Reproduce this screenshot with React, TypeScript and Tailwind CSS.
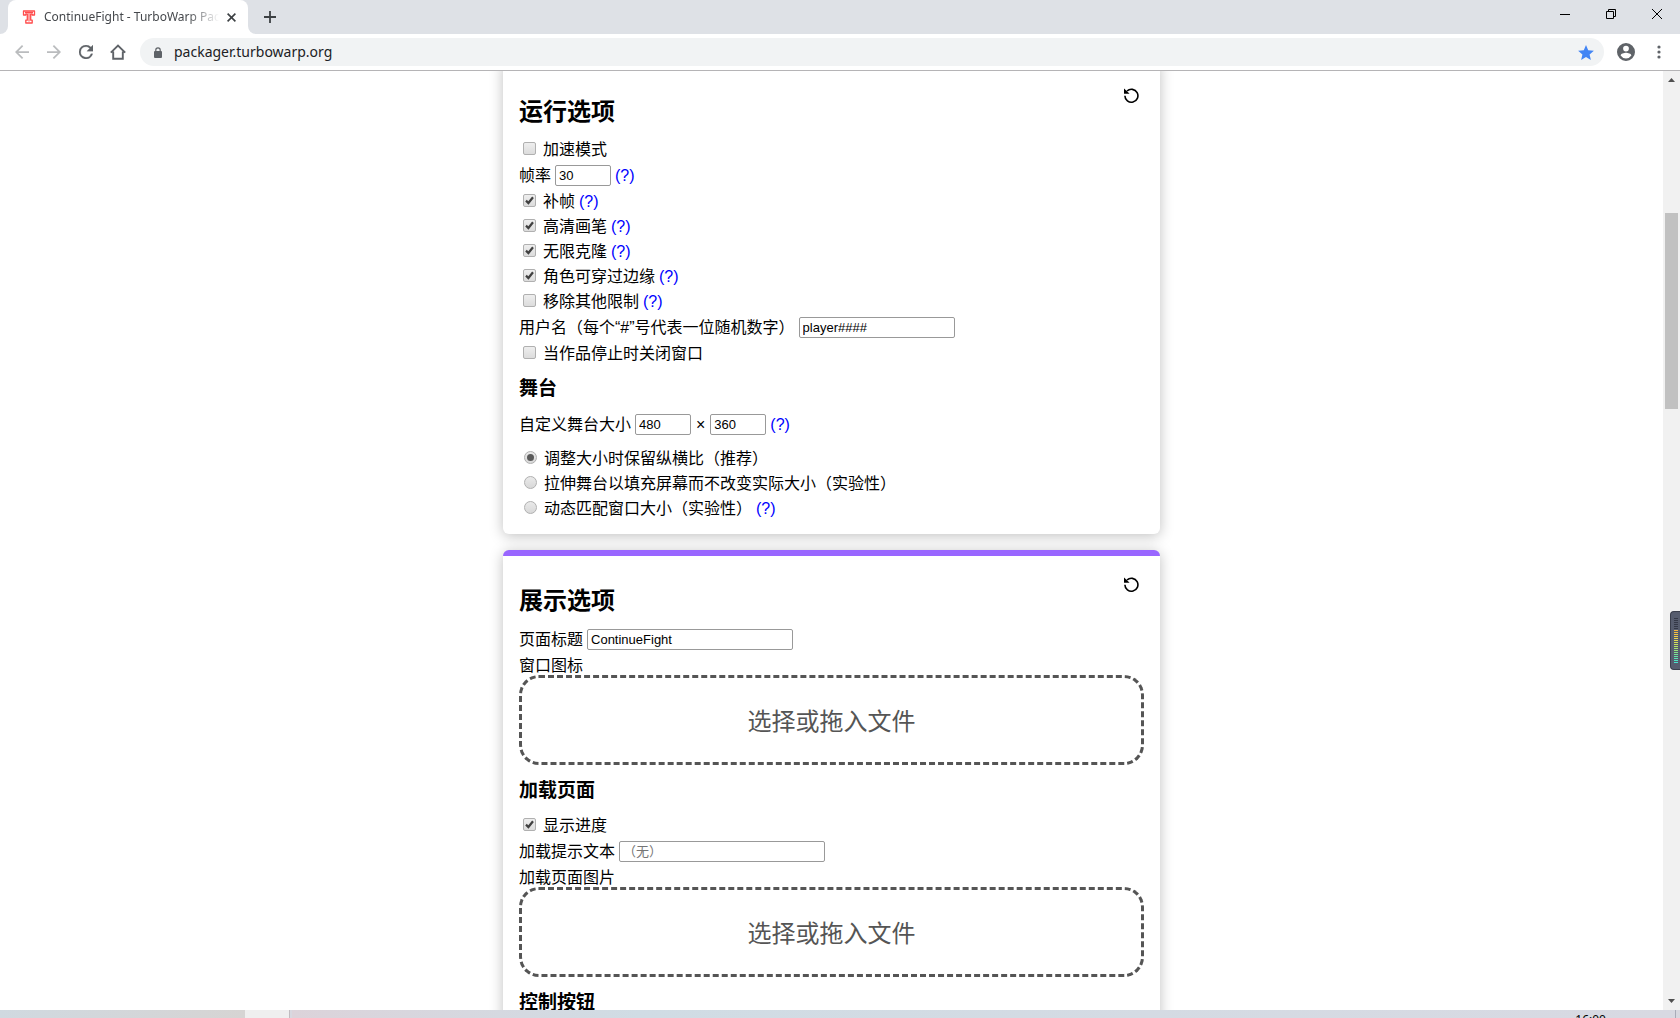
import { useId, type ReactNode } from "react";
import clsx from "clsx";

const METER_COLORS = [
  "bg-[#343847]", "bg-[#343847]", "bg-[#343847]", "bg-[#343847]", "bg-[#343847]", "bg-[#343847]",
  "bg-[#f5b83d]", "bg-[#f5c03f]", "bg-[#f4c843]", "bg-[#f2d048]", "bg-[#ecd74d]", "bg-[#e2dc52]",
  "bg-[#d6e058]", "bg-[#c8e25e]", "bg-[#b8e366]", "bg-[#a6e470]", "bg-[#95e47c]", "bg-[#84e489]",
  "bg-[#74e496]", "bg-[#66e4a4]", "bg-[#5ae4b2]", "bg-[#50e4c0]", "bg-[#48e2ce]",
];

function Help() {
  return (
    <a href="#help" className="text-[#0000ff]">
      (?)
    </a>
  );
}

function CheckRow({ label, checked, help }: { label: string; checked?: boolean; help?: boolean }) {
  const id = useId();
  return (
    <div className="flex h-[25px] items-center gap-1">
      <span className="relative mr-[3px] mb-0.5 ml-1 flex size-[13px]">
        <input
          id={id}
          type="checkbox"
          defaultChecked={checked}
          className="peer size-[13px] appearance-none rounded-xs border border-[#b0b0b0] bg-linear-to-b from-[#eeeeee] to-[#dcdcdc]"
        />
        <svg
          viewBox="0 0 13 13"
          className="pointer-events-none invisible absolute inset-0 size-[13px] peer-checked:visible"
          fill="none"
          stroke="#404040"
          strokeWidth="2.2"
        >
          <path d="M3 6.6 5.4 9 10 3.2" />
        </svg>
      </span>
      <label htmlFor={id}>{label}</label>
      {help && <Help />}
    </div>
  );
}

function RadioRow({ label, checked, help }: { label: string; checked?: boolean; help?: boolean }) {
  const id = useId();
  return (
    <div className="flex h-[25px] items-center gap-1">
      <span className="relative mr-[3px] mb-0.5 ml-[5px] flex size-[13px]">
        <input
          id={id}
          type="radio"
          name="resize-mode"
          defaultChecked={checked}
          className="peer size-[13px] appearance-none rounded-full border border-[#b0b0b0] bg-linear-to-b from-[#eaeaea] to-[#d8d8d8]"
        />
        <span className="pointer-events-none invisible absolute top-[3px] left-[3px] size-[7px] rounded-full bg-[#5a5a5a] peer-checked:visible" />
      </span>
      <label htmlFor={id}>{label}</label>
      {help && <Help />}
    </div>
  );
}

const inputClass =
  "h-[21px] rounded-xs border border-[#999999] bg-white px-[3px] text-[13px] leading-4 text-black placeholder:text-[#757575]";

function TextRow({
  label,
  value,
  placeholder,
  width,
}: {
  label: string;
  value?: string;
  placeholder?: string;
  width: string;
}) {
  const id = useId();
  return (
    <div className="flex h-[27px] items-center gap-1">
      <label htmlFor={id}>{label}</label>
      <input id={id} type="text" defaultValue={value} placeholder={placeholder} className={clsx(inputClass, width)} />
    </div>
  );
}

function DropZone({ label }: { label: string }) {
  return (
    <div className="mb-3.5">
      <div className="h-[22px] leading-[25px]">{label}</div>
      <button
        type="button"
        aria-label={label}
        className="flex h-[90px] w-full items-center justify-center rounded-[20px] border-[3px] border-dashed border-[#555555] pt-1 text-2xl text-[#555555]"
      >
        选择或拖入文件
      </button>
    </div>
  );
}

function SubHeading({ children }: { children: ReactNode }) {
  return <h3 className="mb-2.5 text-[19px] leading-6 font-bold">{children}</h3>;
}

function Card({ title, children }: { title: string; children: ReactNode }) {
  return (
    <section className="w-full max-w-[657px] rounded-md border-t-[6px] border-[#9966ff] bg-white px-4 pt-[17px] pb-[13px] shadow-[0_2px_14px_rgba(0,0,0,0.25)]">
      <div className="mb-[9px] flex items-start justify-between">
        <h2 className="mt-3 text-2xl leading-8 font-bold">{title}</h2>
        <button type="button" aria-label="重置" className="flex size-6 items-center justify-center">
          <svg viewBox="0 0 16 16" className="size-4" fill="none" stroke="#000" strokeWidth="1.6">
            <path d="M.9 7.8A6.500 6.500 0 1 0 3 3" />
            <path d="M0 .6v5.200h5.600z" fill="#000" stroke="none" />
          </svg>
        </button>
      </div>
      {children}
    </section>
  );
}

function TabStrip() {
  return (
    <div className="flex h-[34px] shrink-0 items-stretch bg-[#dee1e6]">
      <div className="flex w-2 items-end bg-white">
        <div className="h-full w-full rounded-br-lg bg-[#dee1e6]" />
      </div>
      <div className="flex w-60 items-center rounded-t-lg bg-white pr-3 pl-3.5">
        <svg viewBox="0 0 14 14" className="mr-2 size-3.5 shrink-0">
          <path
            d="M1.500 1h11v4h-2.300V3.800H8.700v6.400h1.500V13H3.800v-2.800h1.500V3.800H3.800V5H1.500z"
            fill="#ffffff"
            stroke="#ff4c4c"
            strokeWidth="1.3"
            strokeLinejoin="round"
          />
          <path d="M3 2.400h8M7 2.400v9.200" stroke="#ff4c4c" strokeWidth="1.1" />
        </svg>
        <span className="min-w-0 flex-1 overflow-hidden mask-r-from-82% text-xs whitespace-nowrap text-[#45484c]">
          ContinueFight - TurboWarp Packager
        </span>
        <button type="button" aria-label="Close tab" className="ml-2">
          <svg viewBox="0 0 9 9" className="size-[9px]" stroke="#3c4043" strokeWidth="1.6">
            <path d="M.6.6 8.4 8.4M8.4.6.6 8.4" />
          </svg>
        </button>
      </div>
      <div className="w-2 bg-white">
        <div className="h-full w-full rounded-bl-lg bg-[#dee1e6]" />
      </div>
      <button type="button" aria-label="New tab" className="ml-2">
        <svg viewBox="0 0 12 12" className="size-3" stroke="#3c4043" strokeWidth="1.8">
          <path d="M6 0v12M0 6h12" />
        </svg>
      </button>
      <div className="ml-auto flex h-7 text-black">
        <button type="button" aria-label="Minimize" className="flex w-[46px] items-center justify-center">
          <svg viewBox="0 0 10 10" className="size-2.5" stroke="currentColor">
            <path d="M0 5.5h10" />
          </svg>
        </button>
        <button type="button" aria-label="Restore" className="flex w-[46px] items-center justify-center">
          <svg viewBox="0 0 10 10" className="size-2.5" fill="none" stroke="currentColor">
            <path d="M.5 2.5h7v7h-7zM2.5 2.5v-2h7v7h-2" />
          </svg>
        </button>
        <button type="button" aria-label="Close" className="flex w-[46px] items-center justify-center">
          <svg viewBox="0 0 10 10" className="size-2.5" stroke="currentColor">
            <path d="M0 0l10 10M10 0 0 10" />
          </svg>
        </button>
      </div>
    </div>
  );
}

function Toolbar() {
  return (
    <div className="flex h-[37px] shrink-0 items-center border-b border-[#b5b4b6] bg-white pl-3.5">
      <button type="button" aria-label="Back" className="mr-4">
        <svg viewBox="4 4 16 16" className="size-4 p-px" fill="#babcbe">
          <path d="M20 11H7.83l5.59-5.59L12 4l-8 8 8 8 1.41-1.41L7.83 13H20v-2z" />
        </svg>
      </button>
      <button type="button" aria-label="Forward" className="mr-4">
        <svg viewBox="4 4 16 16" className="size-4 p-px" fill="#babcbe">
          <path d="m12 4-1.41 1.41L16.17 11H4v2h12.17l-5.58 5.59L12 20l8-8z" />
        </svg>
      </button>
      <button type="button" aria-label="Reload" className="mr-4">
        <svg viewBox="4 4 16 16" className="size-4 p-px" fill="#5f6368" stroke="#5f6368" strokeWidth=".3">
          <path d="M17.65 6.35A7.96 7.96 0 0 0 12 4a8 8 0 1 0 7.73 10h-2.08A6 6 0 1 1 12 6c1.66 0 3.14.69 4.22 1.78L13 11h7V4z" />
        </svg>
      </button>
      <button type="button" aria-label="Home" className="mr-3.5">
        <svg viewBox="0 0 16 16" className="size-4" fill="none" stroke="#5f6368" strokeWidth="1.9">
          <path d="M.8 8.6 8 1.5l7.2 7.1M3.2 7.4v7.4h9.6V7.4" />
        </svg>
      </button>
      <div className="flex h-7 flex-1 items-center rounded-full bg-[#f1f3f4] pr-2.5 pl-3.5">
        <svg viewBox="0 0 8 11" className="mr-3 h-[11px] w-2 shrink-0">
          <rect y="4" width="8" height="7" rx="1" fill="#5f6368" />
          <path d="M1.8 4.5V3a2.2 2.2 0 0 1 4.4 0v1.5" fill="none" stroke="#5f6368" strokeWidth="1.2" />
        </svg>
        <input
          type="text"
          aria-label="Address"
          defaultValue="packager.turbowarp.org"
          className="min-w-0 flex-1 bg-transparent text-sm text-[#202124]"
        />
        <button type="button" aria-label="Bookmark">
          <svg viewBox="2 2 20 19" className="h-[15px] w-4" fill="#4285f4">
            <path d="M12 17.27 18.18 21l-1.64-7.03L22 9.24l-7.19-.61L12 2 9.19 8.63 2 9.24l5.46 4.73L5.82 21z" />
          </svg>
        </button>
      </div>
      <button type="button" aria-label="Profile" className="mr-[22px] ml-[13px]">
        <svg viewBox="2 2 20 20" className="size-[18px]" fill="#5f6368">
          <path d="M12 2a10 10 0 1 0 0 20 10 10 0 0 0 0-20zm0 3a3.2 3.2 0 1 1 0 6.400 3.200 3.200 0 0 1 0-6.400zm0 14.200a7.200 7.200 0 0 1-6-3.220c.03-1.990 4-3.080 6-3.080s5.970 1.090 6 3.080a7.200 7.200 0 0 1-6 3.220z" />
        </svg>
      </button>
      <button type="button" aria-label="Menu" className="mr-[19px]">
        <svg viewBox="0 0 4 14" className="h-3.5 w-1" fill="#5f6368">
          <circle cx="2" cy="2" r="1.6" />
          <circle cx="2" cy="7" r="1.6" />
          <circle cx="2" cy="12" r="1.6" />
        </svg>
      </button>
    </div>
  );
}

function Scrollbar() {
  return (
    <div className="flex w-[17px] shrink-0 flex-col items-center bg-[#f1f1f1]">
      <svg viewBox="0 0 7 4" className="mt-[7px] h-1 w-[7px]" fill="#505050">
        <path d="M0 4 3.500 0 7 4z" />
      </svg>
      <div className="mt-[131px] h-[196px] w-[13px] bg-[#c1c1c1]" />
      <svg viewBox="0 0 7 4" className="mt-auto mb-[7px] h-1 w-[7px]" fill="#505050">
        <path d="M0 0h7L3.500 4z" />
      </svg>
    </div>
  );
}

export default function App() {
  const fpsId = useId();
  const stageId = useId();

  return (
    <div className="relative flex h-screen flex-col overflow-hidden bg-white font-['Noto_Sans','Noto_Sans_CJK_SC',sans-serif] text-black">
      <TabStrip />
      <Toolbar />

      <div className="flex min-h-0 flex-1">
        <main className="min-w-0 flex-1 overflow-hidden font-['Liberation_Sans','Noto_Sans_CJK_SC',sans-serif] text-base leading-[25px]">
          {/* scrolled a little past the top of the first card */}
          <div className="-mt-2.5 flex flex-col items-center gap-4">
            <Card title="运行选项">
              <CheckRow label="加速模式" />
              <div className="flex h-[27px] items-center gap-1">
                <label htmlFor={fpsId}>帧率</label>
                <input id={fpsId} type="number" defaultValue={30} className={clsx(inputClass, "w-14")} />
                <Help />
              </div>
              <CheckRow label="补帧" checked help />
              <CheckRow label="高清画笔" checked help />
              <CheckRow label="无限克隆" checked help />
              <CheckRow label="角色可穿过边缘" checked help />
              <CheckRow label="移除其他限制" help />
              <TextRow label="用户名（每个“#”号代表一位随机数字）" value="player####" width="w-[156px]" />
              <CheckRow label="当作品停止时关闭窗口" />

              <div className="mt-[11px]">
                <SubHeading>舞台</SubHeading>
              </div>
              <div className="mb-2 flex h-[27px] items-center gap-1">
                <label htmlFor={stageId}>自定义舞台大小</label>
                <input id={stageId} type="number" defaultValue={480} className={clsx(inputClass, "w-14")} />
                <span className="px-px">×</span>
                <input type="number" aria-label="舞台高度" defaultValue={360} className={clsx(inputClass, "w-14")} />
                <Help />
              </div>
              <RadioRow label="调整大小时保留纵横比（推荐）" checked />
              <RadioRow label="拉伸舞台以填充屏幕而不改变实际大小（实验性）" />
              <RadioRow label="动态匹配窗口大小（实验性）" help />
            </Card>

            <Card title="展示选项">
              <TextRow label="页面标题" value="ContinueFight" width="w-[206px]" />
              <DropZone label="窗口图标" />

              <SubHeading>加载页面</SubHeading>
              <CheckRow label="显示进度" checked />
              <TextRow label="加载提示文本" placeholder="（无）" width="w-[206px]" />
              <DropZone label="加载页面图片" />

              <SubHeading>控制按钮</SubHeading>
            </Card>
          </div>
        </main>
        <Scrollbar />
      </div>

      {/* desktop meter docked over the window edge */}
      <div className="absolute top-[611px] right-0 flex h-[59px] w-2.5 flex-col gap-px rounded-l-sm border border-r-0 border-[#3a3e4c] bg-[#565c6e] pt-1.5 pl-[3px]">
        {METER_COLORS.map((color, i) => (
          <span key={i} className={clsx("h-px w-1 shrink-0", color)} />
        ))}
      </div>

      <div className="flex h-2 shrink-0 overflow-hidden bg-[#d8d8e0]">
        <div className="w-[245px] bg-linear-to-r from-[#d0d9e0] to-[#d6d4d3]" />
        <div className="w-11 bg-[#efefef]" />
        <div className="mr-0.5 w-px bg-[#c0bcc0]" />
        <div className="flex flex-1 justify-end bg-linear-to-r from-[#dcd3da] via-[#d0dce4] via-25% to-[#d8d9e2] pr-[69px] text-xs leading-5 text-black">
          16:00
        </div>
        <div className="mr-1 w-px bg-[#a8abb8]" />
      </div>
    </div>
  );
}
